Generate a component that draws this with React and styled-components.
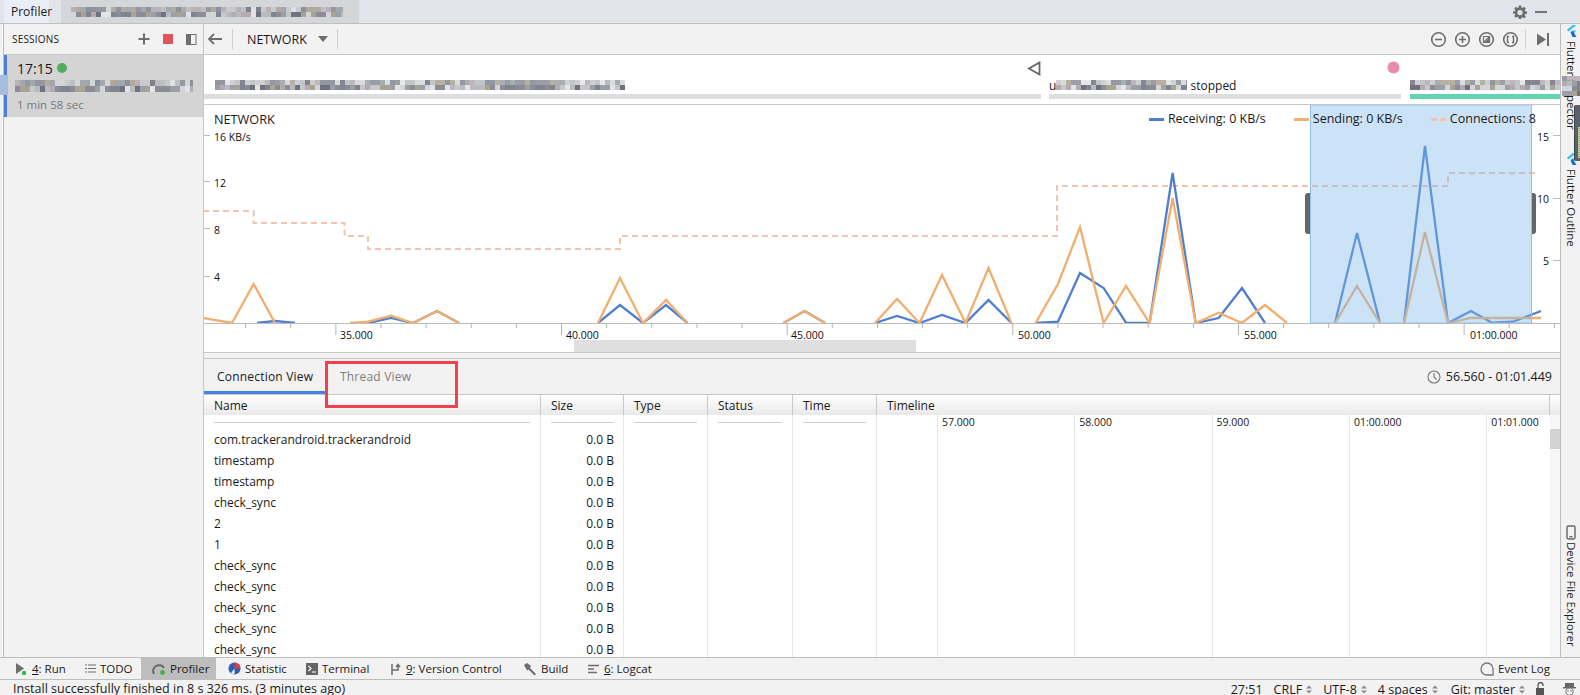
import React from 'react';
import styled, { createGlobalStyle } from 'styled-components';

const Global = createGlobalStyle`
  html, body { margin: 0; padding: 0; background: #f2f2f2; }
  body { font-family: "Open Sans", "Liberation Sans", sans-serif; font-size: 12px; color: #1a1a1a; overflow: hidden; }
  * { box-sizing: border-box; }
`;

const Page = styled.div`
  position: relative; width: 1580px; height: 695px; overflow: hidden;
  display: flex; flex-direction: column; background: #f2f2f2;
`;
const TitleBar = styled.header`
  height: 24px; flex: none; display: flex; align-items: stretch; padding-left: 4px;
  background: #e1e4ea; border-bottom: 1px solid #bfc0c2; border-left: 0;
`;
const TitleTab = styled.div`
  width: 45px; display: flex; align-items: center; padding-left: 7px; background: #e9edf5; font-size: 12px;
`;
const BlurTab = styled.div`
  width: 298px; margin-left: 12px; background: #d5d6da; display: flex; align-items: center; padding-left: 10px; overflow: hidden;
`;
const TitleTools = styled.div`
  margin-left: auto; width: 67px; display: flex; align-items: center; gap: 8px;
`;
const Main = styled.div`
  flex: none; height: 633px; display: flex; min-height: 0;
`;
const LeftEdge = styled.div`
  width: 4px; flex: none; border-right: 1px solid #bdbdbd; background: #f2f2f2;
`;
const Sessions = styled.aside`
  width: 200px; flex: none; border-right: 1px solid #c6c6c6; background: #f2f2f2; display: flex; flex-direction: column; position: relative;
`;
const SessionsHead = styled.div`
  height: 31px; flex: none; display: flex; align-items: center; padding: 0 6px 0 8px; border-bottom: 1px solid #c6c6c6; font-size: 10px;
`;
const SessionsTitle = styled.span`
  flex: 1; letter-spacing: 0.2px;
`;
const HeadIcons = styled.div`
  display: flex; align-items: center; gap: 13px;
`;
const SessionCard = styled.div`
  height: 62px; background: #d4d4d4; border-left: 3px solid #4a80dc; padding: 4px 0 0 10px; position: relative;
`;
const SessionTime = styled.div`
  font-size: 14px; line-height: 19px; display: flex; align-items: center; gap: 4px;
`;
const GreenDot = styled.span`
  width: 10px; height: 10px; border-radius: 50%; background: #52ad5e; margin-top: -2px;
`;
const SessionName = styled.div`
  height: 12px; margin: 2px 0 0 -2px; overflow: hidden; display: flex;
`;
const SessionDuration = styled.div`
  font-size: 11.5px; color: #777; margin-top: 5px; line-height: 16px; margin-left: 0;
`;
const CardPatch = styled.span`
  position: absolute; left: -8px; top: 20px; width: 9px; height: 20px; background: #a8bedd;
`;
const Content = styled.section`
  flex: 1; min-width: 0; display: flex; flex-direction: column; background: #fff;
`;
const Toolbar = styled.div`
  height: 31px; flex: none; display: flex; align-items: center; background: #f2f2f2; border-bottom: 1px solid #c6c6c6; padding-left: 4px; padding-right: 10px;
`;
const ToolDivider = styled.span`
  width: 1px; height: 20px; background: #cfcfcf; flex: none;
  margin: ${p => p.$m || '0'};
`;
const ViewName = styled.div`
  font-size: 12.5px; display: flex; align-items: center; gap: 11px;
`;
const ZoomGroup = styled.div`
  margin-left: auto; display: flex; align-items: center; gap: 7px;
`;
const Events = styled.div`
  height: 50px; flex: none; position: relative; display: flex; align-items: flex-end; gap: 8px; border-bottom: 1px solid #c6c6c6; background: #fff; padding-bottom: 5px;
`;
const EventSeg = styled.div`
  flex: ${p => p.$grow ? '1' : `none`}; width: ${p => p.$w ? p.$w + 'px' : 'auto'}; margin-left: ${p => p.$ml || 0}px;
  display: flex; flex-direction: column;
`;
const EventLabel = styled.div`
  height: 16px; padding-left: ${p => p.$pl || 0}px; display: flex; align-items: center; font-size: 12px; white-space: nowrap; overflow: hidden; margin-bottom: 1px;
`;
const EventBar = styled.div`
  height: 5px; background: ${p => p.$c || '#dcdee0'};
`;
const EventMark = styled.svg`
  position: absolute; top: 6px; left: ${p => p.$x}px;
`;
const Chart = styled.div`
  height: 248px; flex: none; position: relative; border-bottom: 1px solid #c6c6c6; background: #fff;
`;
const ChartSvg = styled.svg`
  position: absolute; inset: 0; display: block;
`;
const AxisText = styled.text`
  font-family: "Open Sans", "Liberation Sans", sans-serif; font-size: 10.5px; fill: #111;
`;
const ChartTitle = styled.div`
  position: absolute; left: 10px; top: 6px; font-size: 12.7px; line-height: 16px;
`;
const Legend = styled.div`
  position: absolute; right: 24px; top: 6px; display: flex; gap: 28px; font-size: 12.5px; line-height: 16px;
`;
const LegendItem = styled.div`
  display: flex; align-items: center; gap: 4px;
`;
const Swatch = styled.span`
  width: 15px; height: 0; border-top: 3px ${p => p.$dash ? 'dashed' : 'solid'} ${p => p.$c};
`;
const Splitter = styled.div`
  height: 6px; flex: none; background: #f2f2f2; border-bottom: 1px solid #c6c6c6;
`;
const TabsRow = styled.div`
  height: 36px; flex: none; display: flex; align-items: stretch; background: #f2f2f2; border-bottom: 1px solid #c6c6c6; position: relative;
`;
const Tab = styled.div`
  width: ${p => p.$w}px; padding-left: ${p => p.$pl}px; display: flex; align-items: center; padding-top: 3px; font-size: 12px; letter-spacing: 0.2px; white-space: nowrap;
  color: ${p => p.$active ? '#1a1a1a' : '#808080'};
  border-bottom: 3px solid ${p => p.$active ? '#4083e0' : 'transparent'};
`;
const RedBox = styled.div`
  position: absolute; left: 121px; top: 2px; width: 133px; height: 47px; border: 3px solid #f1404e; z-index: 3;
`;
const RangeLabel = styled.div`
  margin-left: auto; padding-right: 8px; display: flex; align-items: center; gap: 5px; font-size: 12.5px;
`;
const TableHead = styled.div`
  height: 20px; flex: none; display: flex; background: linear-gradient(#fff, #e9e9e9); font-size: 12px;
`;
const HeadCell = styled.div`
  width: ${p => p.$w ? p.$w + 'px' : 'auto'}; flex: ${p => p.$w ? 'none' : '1'}; padding-left: 10px; line-height: 21px;
  border-right: 1px solid #c9c9c9; 
`;
const HeadGutter = styled.div`
  width: 10px; flex: none;
`;
const TableBody = styled.div`
  flex: 1; min-height: 0; display: flex; overflow: hidden; background: #fff; position: relative;
`;
const Column = styled.div`
  width: ${p => p.$w}px; flex: none; border-right: 1px solid #e6e6e6; padding: 7px ${p => p.$right ? 9 : 10}px 0 10px;
  text-align: ${p => p.$right ? 'right' : 'left'};
`;
const FilterLine = styled.div`
  height: 1px; background: #cfcfcf; margin-bottom: 6px;
`;
const Cell = styled.div`
  height: 21px; line-height: 21px; font-size: 12px; white-space: nowrap;
`;
const TimelineCol = styled.div`
  flex: 1; display: flex; padding-left: 60px; min-width: 0;
`;
const TimeTick = styled.div`
  width: 137.3px; flex: none; border-left: 1px solid #e6e6e6; font-size: 10.5px; padding-left: 4px; line-height: 15px; white-space: nowrap;
`;
const Scrollbar = styled.div`
  width: 10px; flex: none; background: #f7f7f7; padding-top: 14px;
`;
const ScrollThumb = styled.div`
  height: 20px; background: #d2d2d2;
`;
const RightStrip = styled.aside`
  width: 20px; flex: none; border-left: 1px solid #bdbdbd; background: #f2f2f2; display: flex; flex-direction: column; align-items: center; position: relative;
`;
const VerticalLabel = styled.div`
  writing-mode: vertical-rl; font-size: 11.5px; line-height: 16px; white-space: nowrap;
  margin-top: ${p => p.$mt || 0}px; height: ${p => p.$h ? p.$h + 'px' : 'auto'};
`;
const StripIcon = styled.div`
  margin-top: ${p => p.$mt || 0}px; display: flex;
`;
const DarkWidget = styled.div`
  position: absolute; left: 13px; top: 81px; width: 8px; height: 56px; background: #5a6070; border-radius: 2px 0 0 2px;
  border-left: 1px solid #444;
`;
const WidgetBar = styled.div`
  position: absolute; left: 3px; top: 22px; bottom: 3px; width: 3px; background: repeating-linear-gradient(#cfd88f 0 1px, #7fae8f 1px 2px);
`;
const StripPatch = styled.div`
  position: absolute; left: 1px; top: 52px; overflow: hidden; display: flex;
`;
const ToolStrip = styled.footer`
  height: 22px; flex: none; display: flex; background: #f2f2f2; border-top: 1px solid #bdbdbd; padding-left: 4px; font-size: 11.5px;
`;
const ToolItem = styled.div`
  width: ${p => p.$w}px; flex: none; height: 100%; display: flex; align-items: center; padding-left: ${p => p.$pl || 11}px; gap: 4px;
  background: ${p => p.$on ? '#bdbdbd' : 'transparent'}; white-space: nowrap;
`;
const EventLog = styled.div`
  margin-left: auto; padding-right: 30px; display: flex; align-items: center; gap: 4px;
`;
const StatusBar = styled.footer`
  height: 17px; flex: none; display: flex; align-items: center; background: #f2f2f2; border-top: 1px solid #bdbdbd; font-size: 12.5px; padding-left: 13px; position: relative; white-space: nowrap;
`;
const StatusText = styled.span`
  line-height: 16px; margin-top: 2px;
`;
const StatusRight = styled.div`
  margin-left: auto; display: flex; align-items: center; padding-right: 4px; height: 100%; padding-top: 2px;
`;
const StatusItem = styled.span`
  display: flex; align-items: center; gap: 4px; margin-left: ${p => p.$ml || 0}px;
`;
const MosaicSvg = styled.svg`
  display: block; flex: none; filter: blur(0.6px);
`;

const palette = ['#8c8c96', '#b8bbc0', '#d4d5d9', '#70717f', '#a9a393', '#c5c8c9', '#9aa0a6', '#e2e3e5', '#7f8590', '#b5aab0'];
const Mosaic = ({ w, h = 10, cell = 5, seed = 1, rows = 2 }) => {
  const rects = [];
  let s = seed * 7919;
  const cols = Math.ceil(w / cell);
  for (let r = 0; r < rows; r++) {
    for (let c = 0; c < cols; c++) {
      s = (s * 1103515245 + 12345) & 0x7fffffff;
      const fill = palette[(s >> 8) % palette.length];
      rects.push(<rect key={`${r}-${c}`} x={c * cell} y={r * (h / rows)} width={cell} height={h / rows} fill={fill} opacity={r === 0 ? 0.85 : 1} />);
    }
  }
  return <MosaicSvg width={w} height={h}>{rects}</MosaicSvg>;
};

const Ic = ({ s = 16, w, h, children, vb, ...rest }) => (
  <svg width={w || s} height={h || s} viewBox={vb || `0 0 ${w || s} ${h || s}`} fill="none" style={{ display: 'block', flex: 'none' }} {...rest}>{children}</svg>
);

const Gear = () => (
  <Ic s={14} vb="0 0 24 24">
    <path fill="#6e6e6e" fillRule="evenodd" d="M10 1h4l.6 3.2 1.9.8 2.7-1.9 2.8 2.8-1.9 2.7.8 1.9L24 11v4l-3.1.5-.8 1.9 1.9 2.7-2.8 2.8-2.7-1.9-1.9.8L14 24h-4l-.6-3.2-1.9-.8-2.7 1.9-2.8-2.8 1.9-2.7-.8-1.9L0 15v-4l3.1-.5.8-1.9L2 5.9l2.8-2.8 2.7 1.9 1.9-.8zM12 8.5a4.5 4.5 0 1 0 0 9 4.5 4.5 0 0 0 0-9z" />
  </Ic>
);
const Minimize = () => <Ic w={12} h={2}><rect width="12" height="2" fill="#757575" /></Ic>;
const Plus = () => <Ic s={12}><path d="M6 0.5v11M0.5 6h11" stroke="#6e6e6e" strokeWidth="2" /></Ic>;
const Stop = () => <Ic s={10}><rect width="10" height="11" fill="#e0555c" /></Ic>;
const PanelIc = () => <Ic s={11}><rect x=".5" y=".5" width="9.5" height="10" stroke="#6e6e6e" /><rect x="1" y="1" width="4" height="9" fill="#6e6e6e" /></Ic>;
const Back = () => <Ic w={14} h={12}><path d="M1 6h13M6 1L1 6l5 5" stroke="#6e6e6e" strokeWidth="1.8" /></Ic>;
const Caret = () => <Ic w={10} h={6}><path d="M0 0h10L5 6z" fill="#6e6e6e" /></Ic>;
const Round = ({ children }) => (
  <Ic s={17}>
    <circle cx="8.5" cy="8.5" r="6.8" stroke="#6e6e6e" strokeWidth="1.6" />
    {children}
  </Ic>
);
const SkipEnd = () => <Ic w={13} h={13}><path d="M0 0.5l9 6-9 6z" fill="#6e6e6e" /><rect x="10" y="0" width="2" height="13" fill="#6e6e6e" /></Ic>;
const Clock = () => (
  <Ic s={14}><circle cx="7" cy="7" r="6" stroke="#777" strokeWidth="1.1" /><path d="M7 3v4l2.5 2.5" stroke="#777" strokeWidth="1.1" /></Ic>
);
const FlutterLogo = () => (
  <Ic w={12} h={12}>
    <path d="M7.5 0h4L3.8 6.6 1.8 4.8z" fill="#45c3f5" />
    <path d="M7.5 5.6h4L7.6 9.4l-2-1.9z" fill="#45c3f5" />
    <path d="M5.6 7.5l2-1.9 3.9 6.4h-4z" fill="#1b6fc0" />
  </Ic>
);
const Phone = () => <Ic w={12} h={15}><rect x="2" y="1" width="8" height="13" rx="1.4" stroke="#666" strokeWidth="1.4" /><rect x="4.5" y="11" width="3" height="1.4" fill="#666" /></Ic>;
const RunIc = () => <Ic w={13} h={14}><path d="M1 1l8 5.5L1 12z" fill="#6e6e6e" /><circle cx="9" cy="11" r="2.2" fill="#3fb24f" /></Ic>;
const TodoIc = () => <Ic s={11}><path d="M0 2h2M3 2h8M0 5.5h2M3 5.5h8M0 9h2M3 9h8" stroke="#6e6e6e" strokeWidth="1.2" /></Ic>;
const ProfIc = () => <Ic s={14}><path d="M2 12A5.5 5.5 0 0 1 12 6" stroke="#666" strokeWidth="2" /><circle cx="10.5" cy="10.5" r="2.4" fill="#3fb24f" /></Ic>;
const StatIc = () => <Ic s={13}><circle cx="6.5" cy="6.5" r="6" fill="#2c5fb8" /><path d="M6.5 .5a6 6 0 0 1 6 6H6.5z" fill="#d64040" /><path d="M6.5 6.5V12.5A6 6 0 0 1 3 11z" fill="#eee" /></Ic>;
const TermIc = () => <Ic s={12}><rect width="12" height="12" fill="#666" /><path d="M2.5 3l2.5 2.5L2.5 8M6 9h4" stroke="#fff" strokeWidth="1.1" /></Ic>;
const VcsIc = () => <Ic s={12}><path d="M2 12V1M2 7h6V2M6 4l2-2.5L10 4" stroke="#6e6e6e" strokeWidth="1.5" /></Ic>;
const BuildIc = () => <Ic s={14}><path d="M1 3l3-2 4 3-1 2 6 6-1.5 1.5-6-6-1.5 1z" fill="#6e6e6e" /></Ic>;
const LogIc = () => <Ic s={12}><path d="M0 2.5h11M0 6h6M0 9.5h9" stroke="#6e6e6e" strokeWidth="1.6" /></Ic>;
const Bubble = () => <Ic s={14}><path d="M7 1a6 6 0 1 0 0 12h6V7a6 6 0 0 0-6-6z" stroke="#777" strokeWidth="1.3" /></Ic>;
const UpDown = () => <Ic w={6} h={9}><path d="M0 3.5L3 .5l3 3zM0 5.5l3 3 3-3z" fill="#8a8a8a" /></Ic>;
const Lock = () => <Ic w={11} h={14}><rect x="0" y="6" width="8" height="8" fill="#555" /><path d="M2 6V3a2.5 2.5 0 0 1 5 0v1" stroke="#555" strokeWidth="1.3" /></Ic>;
const Hector = () => <Ic w={13} h={14}><rect x="2" y="1" width="9" height="4" fill="#666" /><rect x="0" y="5" width="13" height="1.4" fill="#666" /><circle cx="6.5" cy="9.5" r="3.8" stroke="#777" /><circle cx="5" cy="9" r=".7" fill="#555" /><circle cx="8" cy="9" r=".7" fill="#555" /></Ic>;

const orange = [[203,318],[232,323],[253.6,284],[275,323],[350,323],[368,321.7],[391,315.7],[413,323],[437,311],[459,323],[598,323],[620,278],[643,323],[666,300],[687.5,323],[783.5,323],[804.5,311],[825,323],[875,323],[897,299],[919.5,323],[942,275],[965.5,323],[988.5,268],[1011.5,323],[1035.6,323],[1058,284],[1080,227],[1103.6,323],[1126,286],[1149.6,323],[1172.6,198],[1195.7,323],[1218.7,312.7],[1242,323],[1265,305],[1287,323],[1335,323],[1357,286],[1380,323],[1404,323],[1425,232],[1448,323],[1471,318],[1492,318],[1541,318]];
const blue = [[257,323],[275,321],[295,323],[368,323],[391,318],[413,323],[437,311],[459,323],[598,323],[620,305],[643,323],[666,305],[687.5,323],[783.5,323],[804.5,311],[825,323],[875,323],[897,316],[919.5,323],[942,315],[965.5,323],[988.5,300],[1011.5,323],[1035.6,323],[1058,321.7],[1080,273],[1103.6,288],[1126,322.7],[1149.6,323],[1172.6,173],[1195.7,323],[1218.7,318],[1242,288],[1265,323],[1335,323],[1357,233],[1380,323],[1404,323],[1425,146],[1448,323],[1471,311],[1492,322.7],[1513,321.7],[1541,311]];
const conn = '203,211 253.6,211 253.6,223 344.6,223 344.6,236 368,236 368,249 620,249 620,236 1057,236 1057,186 1448,186 1448,173 1536,173';
// A run of zero samples sits on the axis: the pen lifts there instead of drawing along it.
const trace = a => a.map(([x, y], i) => {
  const prev = a[i - 1];
  const move = !prev || (prev[1] === 323 && y === 323);
  return `${move ? 'M' : 'L'}${x} ${y}`;
}).join(' ');
const minorTicks = Array.from({ length: 30 }, (_, i) => 245.6 + i * 45.13);
const xLabels = [['35.000', 340], ['40.000', 566], ['45.000', 791], ['50.000', 1018], ['55.000', 1244], ['01:00.000', 1470]];

const NetworkChart = () => (
  <ChartSvg width="1356" height="247" viewBox="204 105 1356 247" fill="none">
    <defs><clipPath id="plot"><rect x="204" y="105" width="1356" height="218" /></clipPath></defs>
    <rect x="574" y="340" width="342" height="12" fill="#dfdfdf" />
    <polyline points={conn} fill="none" stroke="#f0c4ae" strokeWidth="2" strokeDasharray="6 4" />
    <g clipPath="url(#plot)">
      <path d={trace(blue)} fill="none" stroke="#4f7fd0" strokeWidth="2.3" strokeLinejoin="miter" />
      <path d={trace(orange)} fill="none" stroke="#f1ae6f" strokeWidth="2.3" strokeLinejoin="miter" />
    </g>
    <path d="M1310 193h-2a3 3 0 0 0-3 3v35a3 3 0 0 0 3 3h2z" fill="#666" />
    <path d="M1531 193h2a3 3 0 0 1 3 3v35a3 3 0 0 1-3 3h-2z" fill="#666" />
    <rect x="1310.5" y="105" width="221" height="218" fill="rgba(127,184,235,.4)" stroke="#8fc0f0" />
    <path d="M203 323.5h1357" stroke="#bcbcbc" />
    {minorTicks.map((x, i) => {
      const major = (i + 2) % 5 === 4;
      return <path key={i} d={`M${x} 323v${major ? 12 : 5}`} stroke="#b4b4b4" />;
    })}
    {xLabels.map(([t, x]) => <AxisText key={t} x={x} y={339}>{t}</AxisText>)}
    {[135.5, 181.5, 228.5, 276.5].map(y => <path key={y} d={`M204 ${y}h6`} stroke="#bcbcbc" />)}
    <AxisText x="214" y="141">16 KB/s</AxisText>
    <AxisText x="214" y="187">12</AxisText>
    <AxisText x="214" y="234">8</AxisText>
    <AxisText x="214" y="281">4</AxisText>
    {[135.5, 198.5, 260.5].map(y => <path key={y} d={`M1553 ${y}h7`} stroke="#bcbcbc" />)}
    <AxisText x="1537" y="141">15</AxisText>
    <AxisText x="1537" y="203">10</AxisText>
    <AxisText x="1543" y="265">5</AxisText>
  </ChartSvg>
);

const names = ['com.trackerandroid.trackerandroid', 'timestamp', 'timestamp', 'check_sync', '2', '1', 'check_sync', 'check_sync', 'check_sync', 'check_sync', 'check_sync'];
const cols = [['Size', 83], ['Type', 84], ['Status', 85], ['Time', 84]];
const ticks = ['57.000', '58.000', '59.000', '01:00.000', '01:01.000'];

export default function App() {
  return (
    <Page>
      <Global />
      <TitleBar>
        <TitleTab>Profiler</TitleTab>
        <BlurTab><Mosaic w={272} h={10} seed={3} /></BlurTab>
        <TitleTools><Gear /><Minimize /></TitleTools>
      </TitleBar>
      <Main>
        <LeftEdge />
        <Sessions>
          <SessionsHead>
            <SessionsTitle>SESSIONS</SessionsTitle>
            <HeadIcons><Plus /><Stop /><PanelIc /></HeadIcons>
          </SessionsHead>
          <SessionCard>
            <CardPatch />
            <SessionTime>17:15 <GreenDot /></SessionTime>
            <SessionName><Mosaic w={178} h={12} seed={5} /></SessionName>
            <SessionDuration>1 min 58 sec</SessionDuration>
          </SessionCard>
        </Sessions>
        <Content>
          <Toolbar>
            <Back />
            <ToolDivider $m="0 14px 0 10px" />
            <ViewName>NETWORK <Caret /></ViewName>
            <ToolDivider $m="0 0 0 9px" />
            <ZoomGroup>
              <Round><path d="M5 8.5h7" stroke="#6e6e6e" strokeWidth="1.6" /></Round>
              <Round><path d="M5 8.5h7M8.5 5v7" stroke="#6e6e6e" strokeWidth="1.6" /></Round>
              <Round><path d="M5.5 5.5h6v6h-6zM6 11l5-5" stroke="#6e6e6e" strokeWidth="1.2" /><path d="M7 11l4-4v4z" fill="#6e6e6e" /></Round>
              <Round><path d="M7 5.5H5.5v6H7M10 5.5h1.5v6H10" stroke="#6e6e6e" strokeWidth="1.4" /></Round>
              <ToolDivider $m="0 4px 0 -1px" />
              <SkipEnd />
            </ZoomGroup>
          </Toolbar>
          <Events>
            <EventSeg $w={837}>
              <EventLabel $pl={11}><Mosaic w={410} h={10} seed={7} /></EventLabel>
              <EventBar />
            </EventSeg>
            <EventSeg $w={352}>
              <EventLabel>u<Mosaic w={131} h={10} seed={11} />&nbsp;stopped</EventLabel>
              <EventBar />
            </EventSeg>
            <EventSeg $grow $ml={1}>
              <EventLabel><Mosaic w={150} h={10} seed={13} /></EventLabel>
              <EventBar $c="#62d4b0" />
            </EventSeg>
            <EventMark $x={823} width="14" height="15" viewBox="0 0 14 15">
              <path d="M12.5 1.5v12L2 7.5z" stroke="#666" strokeWidth="1.8" fill="#fff" />
            </EventMark>
            <EventMark $x={1183} width="13" height="15" viewBox="0 0 13 15">
              <circle cx="6.5" cy="6.5" r="6" fill="#e88aa8" />
            </EventMark>
          </Events>
          <Chart>
            <NetworkChart />
            <ChartTitle>NETWORK</ChartTitle>
            <Legend>
              <LegendItem><Swatch $c="#4f7fd0" />Receiving: 0 KB/s</LegendItem>
              <LegendItem><Swatch $c="#f1ae6f" />Sending: 0 KB/s</LegendItem>
              <LegendItem><Swatch $c="#f0c4ae" $dash />Connections: 8</LegendItem>
            </Legend>
          </Chart>
          <Splitter />
          <TabsRow>
            <Tab $active $w={123} $pl={13}>Connection View</Tab>
            <Tab $w={129} $pl={13}>Thread View</Tab>
            <RedBox />
            <RangeLabel><Clock />56.560 - 01:01.449</RangeLabel>
          </TabsRow>
          <TableHead>
            <HeadCell $w={337}>Name</HeadCell>
            {cols.map(([t, w]) => <HeadCell key={t} $w={w}>{t}</HeadCell>)}
            <HeadCell>Timeline</HeadCell>
            <HeadGutter />
          </TableHead>
          <TableBody>
            <Column $w={337}>
              <FilterLine />
              {names.map((n, i) => <Cell key={i}>{n}</Cell>)}
            </Column>
            <Column $w={83} $right>
              <FilterLine />
              {names.map((_, i) => <Cell key={i}>0.0 B</Cell>)}
            </Column>
            <Column $w={84}><FilterLine /></Column>
            <Column $w={85}><FilterLine /></Column>
            <Column $w={84}><FilterLine /></Column>
            <TimelineCol>
              {ticks.map(t => <TimeTick key={t}>{t}</TimeTick>)}
            </TimelineCol>
            <Scrollbar><ScrollThumb /></Scrollbar>
          </TableBody>
        </Content>
        <RightStrip>
          <StripIcon $mt={1}><FlutterLogo /></StripIcon>
          <VerticalLabel $mt={4} $h={112}>Flutter Inspector</VerticalLabel>
          <StripPatch><Mosaic w={19} h={20} cell={5} rows={4} seed={17} /></StripPatch>
          <DarkWidget><WidgetBar /></DarkWidget>
          <StripIcon $mt={0}><FlutterLogo /></StripIcon>
          <VerticalLabel $mt={4} $h={356}>Flutter Outline</VerticalLabel>
          <StripIcon><Phone /></StripIcon>
          <VerticalLabel $mt={2}>Device File Explorer</VerticalLabel>
        </RightStrip>
      </Main>
      <ToolStrip>
        <ToolItem $w={70}><RunIc /><span><u>4</u>: Run</span></ToolItem>
        <ToolItem $w={67}><TodoIc /><span>TODO</span></ToolItem>
        <ToolItem $w={75} $on><ProfIc /><span>Profiler</span></ToolItem>
        <ToolItem $w={78} $pl={12}><StatIc /><span>Statistic</span></ToolItem>
        <ToolItem $w={85} $pl={12}><TermIc /><span>Terminal</span></ToolItem>
        <ToolItem $w={132} $pl={11}><VcsIc /><span><u>9</u>: Version Control</span></ToolItem>
        <ToolItem $w={64} $pl={12}><BuildIc /><span>Build</span></ToolItem>
        <ToolItem $w={75} $pl={13}><LogIc /><span><u>6</u>: Logcat</span></ToolItem>
        <EventLog><Bubble />Event Log</EventLog>
      </ToolStrip>
      <StatusBar>
        <StatusText>Install successfully finished in 8 s 326 ms. (3 minutes ago)</StatusText>
        <StatusRight>
          <StatusItem>27:51</StatusItem>
          <StatusItem $ml={11}>CRLF <UpDown /></StatusItem>
          <StatusItem $ml={11}>UTF-8 <UpDown /></StatusItem>
          <StatusItem $ml={11}>4 spaces <UpDown /></StatusItem>
          <StatusItem $ml={13}>Git: master <UpDown /></StatusItem>
          <StatusItem $ml={11}><Lock /></StatusItem>
          <StatusItem $ml={16}><Hector /></StatusItem>
        </StatusRight>
      </StatusBar>
    </Page>
  );
}
